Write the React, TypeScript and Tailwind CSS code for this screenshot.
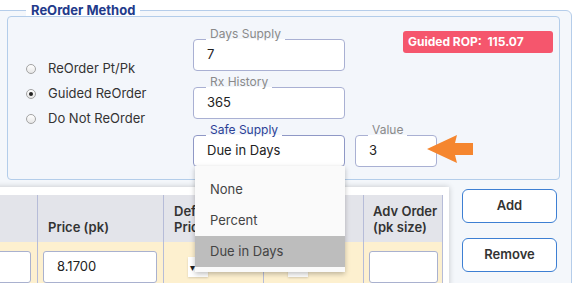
import React from "react";

function Radio({ checked, label }: { checked?: boolean; label: string }) {
  return (
    <div className="flex h-[25px] items-center gap-[12px]">
      <span className="flex h-[10px] w-[10px] items-center justify-center rounded-full border border-[#a3a3a3] bg-[linear-gradient(#ffffff,#e6e6e6)]">
        {checked ? <span className="h-[4px] w-[4px] rounded-full bg-[#222]" /> : null}
      </span>
      <span className="text-[13px] text-[#333]">{label}</span>
    </div>
  );
}

function FieldLabel({ text, active }: { text: string; active?: boolean }) {
  return (
    <span
      className={
        active
          ? "absolute -top-[13px] left-[12px] bg-[linear-gradient(to_bottom,transparent_12px,white_12px)] px-[4px] text-[12px] leading-[14px] text-[#2b3f96]"
          : "absolute -top-[13px] left-[12px] bg-[linear-gradient(to_bottom,transparent_12px,white_12px)] px-[4px] text-[12px] leading-[14px] text-[#8a8a8a]"
      }
    >
      {text}
    </span>
  );
}

export default function App() {
  return (
    <div className="relative h-[283px] w-[583px] overflow-hidden bg-white [font-family:Inter,sans-serif]">
      <div className="relative ml-[-8px] mt-[10px] h-[300px] w-[580px] rounded-[6px] border border-[#b5cdea] bg-[#f4f7fb] pl-[14px] pt-[5px]">
        <span className="absolute left-[33px] top-[-11px] bg-white px-[5px] text-[13px] font-bold leading-[20px] text-[#233a8b]">
          ReOrder Method
        </span>

        <div className="relative flex h-[164px] w-[553px] rounded-[4px] border border-[#b3cdea] bg-[#f3f6fb] pl-[18px] pt-[22px]">
          <div className="flex w-[167px] flex-col pt-[17px]">
            <Radio label="ReOrder Pt/Pk" />
            <Radio label="Guided ReOrder" checked />
            <Radio label="Do Not ReOrder" />
          </div>

          <div className="flex flex-col gap-[16px]">
            <div className="relative flex h-[32px] w-[152px] items-center rounded-[4px] border border-[#a9b0d3] bg-white pl-[13px] text-[13px] text-[#222]">
              <FieldLabel text="Days Supply" />7
            </div>
            <div className="relative flex h-[32px] w-[152px] items-center rounded-[4px] border border-[#a9b0d3] bg-white pl-[13px] text-[13px] text-[#222]">
              <FieldLabel text="Rx History" />365
            </div>
            <div className="flex gap-[10px]">
              <div className="relative flex h-[32px] w-[152px] items-center rounded-[4px] border border-[#8f98c6] bg-white pl-[13px] text-[13px] text-[#222]">
                <FieldLabel text="Safe Supply" active />
                Due in Days
                <div className="absolute left-[1px] top-[30px] z-20 h-[106px] w-[150px] bg-[#fafafa] pt-[8px] shadow-[0_2px_5px_rgba(0,0,0,0.25)]">
                  <div className="flex h-[31px] items-center pl-[15px] text-[13px] text-[#444]">None</div>
                  <div className="flex h-[31px] items-center pl-[15px] text-[13px] text-[#444]">Percent</div>
                  <div className="flex h-[31px] items-center bg-[#bdbdbd] pl-[15px] text-[13px] text-[#444]">Due in Days</div>
                </div>
              </div>
              <div className="relative flex h-[32px] w-[82px] items-center rounded-[4px] border border-[#a9b0d3] bg-white pl-[13px] text-[13px] text-[#222]">
                <FieldLabel text="Value" />3
              </div>
            </div>
          </div>

          <div className="absolute right-[6px] top-[14px] flex h-[22px] w-[150px] items-center whitespace-pre rounded-[3px] bg-[#f5566d] pl-[5px] text-[12px] font-bold text-white">
            {"Guided ROP:  115.07"}
          </div>
        </div>

        <div className="ml-[-14px] mt-[7px] flex">
          <div className="w-[456px] bg-white pr-[6px] pt-[8px] shadow-[0_0_6px_rgba(0,0,0,0.2)]">
            <div className="grid grid-cols-[44px_126px_100px_100px_80px] bg-[#e3e4ea] text-[13px] font-semibold leading-[16px] text-[#333]">
              <div className="h-[47px]" />
              <div className="flex h-[47px] items-end border-l border-[#b6bcd8] pb-[7px] pl-[10px]">Price (pk)</div>
              <div className="flex h-[47px] items-end border-l border-[#b6bcd8] pb-[7px] pl-[10px]">
                Default
                <br />
                Price
              </div>
              <div className="flex h-[47px] items-end border-l border-[#b6bcd8] pb-[7px] pl-[10px]">
                Auto
                <br />
                Order
              </div>
              <div className="flex h-[47px] flex-col justify-end border-l border-r border-[#b6bcd8] pb-[7px] pl-[9px]">
                <span>Adv Order</span>
                <span>(pk size)</span>
              </div>
            </div>
            <div className="grid h-[60px] grid-cols-[44px_126px_100px_100px_80px] bg-[#fdf0cf]">
              <div className="pr-[6px] pt-[9px]">
                <div className="h-[32px] rounded-[3px] border border-[#a9b1cf] bg-white" />
              </div>
              <div className="border-l border-[#b6bcd8] pl-[5px] pr-[6px] pt-[9px]">
                <div className="flex h-[32px] items-center rounded-[3px] border border-[#a9b1cf] bg-white pl-[13px] text-[13px] text-[#222]">
                  8.1700
                </div>
              </div>
              <div className="border-l border-[#b6bcd8] pl-[24px] pt-[15px]">
                <div className="flex h-[20px] w-[20px] items-center bg-white pl-[2px] text-[10px] text-[#222] shadow-[0_1px_2px_rgba(0,0,0,0.15)]">
                  ▾
                </div>
              </div>
              <div className="border-l border-[#b6bcd8] pl-[24px] pt-[15px]">
                <div className="flex h-[20px] w-[20px] items-center bg-white pl-[2px] text-[10px] text-[#222] shadow-[0_1px_2px_rgba(0,0,0,0.15)]">
                  ▾
                </div>
              </div>
              <div className="border-l border-r border-[#b6bcd8] pl-[5px] pr-[4px] pt-[9px]">
                <div className="h-[32px] rounded-[3px] border border-[#a9b1cf] bg-white" />
              </div>
            </div>
          </div>

          <div className="ml-[13px] mt-[2px] flex flex-col gap-[15px]">
            <button className="h-[34px] w-[95px] rounded-[6px] border-[1.5px] border-[#3d7fd3] bg-white text-[13px] font-semibold text-[#333]">
              Add
            </button>
            <button className="h-[34px] w-[95px] rounded-[6px] border-[1.5px] border-[#3d7fd3] bg-white text-[13px] font-semibold text-[#333]">
              Remove
            </button>
          </div>
        </div>
      </div>

      <svg className="absolute left-[427px] top-[133px]" width="47" height="32" viewBox="0 0 47 32">
        <polygon points="0,16 30,2 28,10 46,10 46,22 28,22 30,30" fill="#f5862f" />
      </svg>
    </div>
  );
}
